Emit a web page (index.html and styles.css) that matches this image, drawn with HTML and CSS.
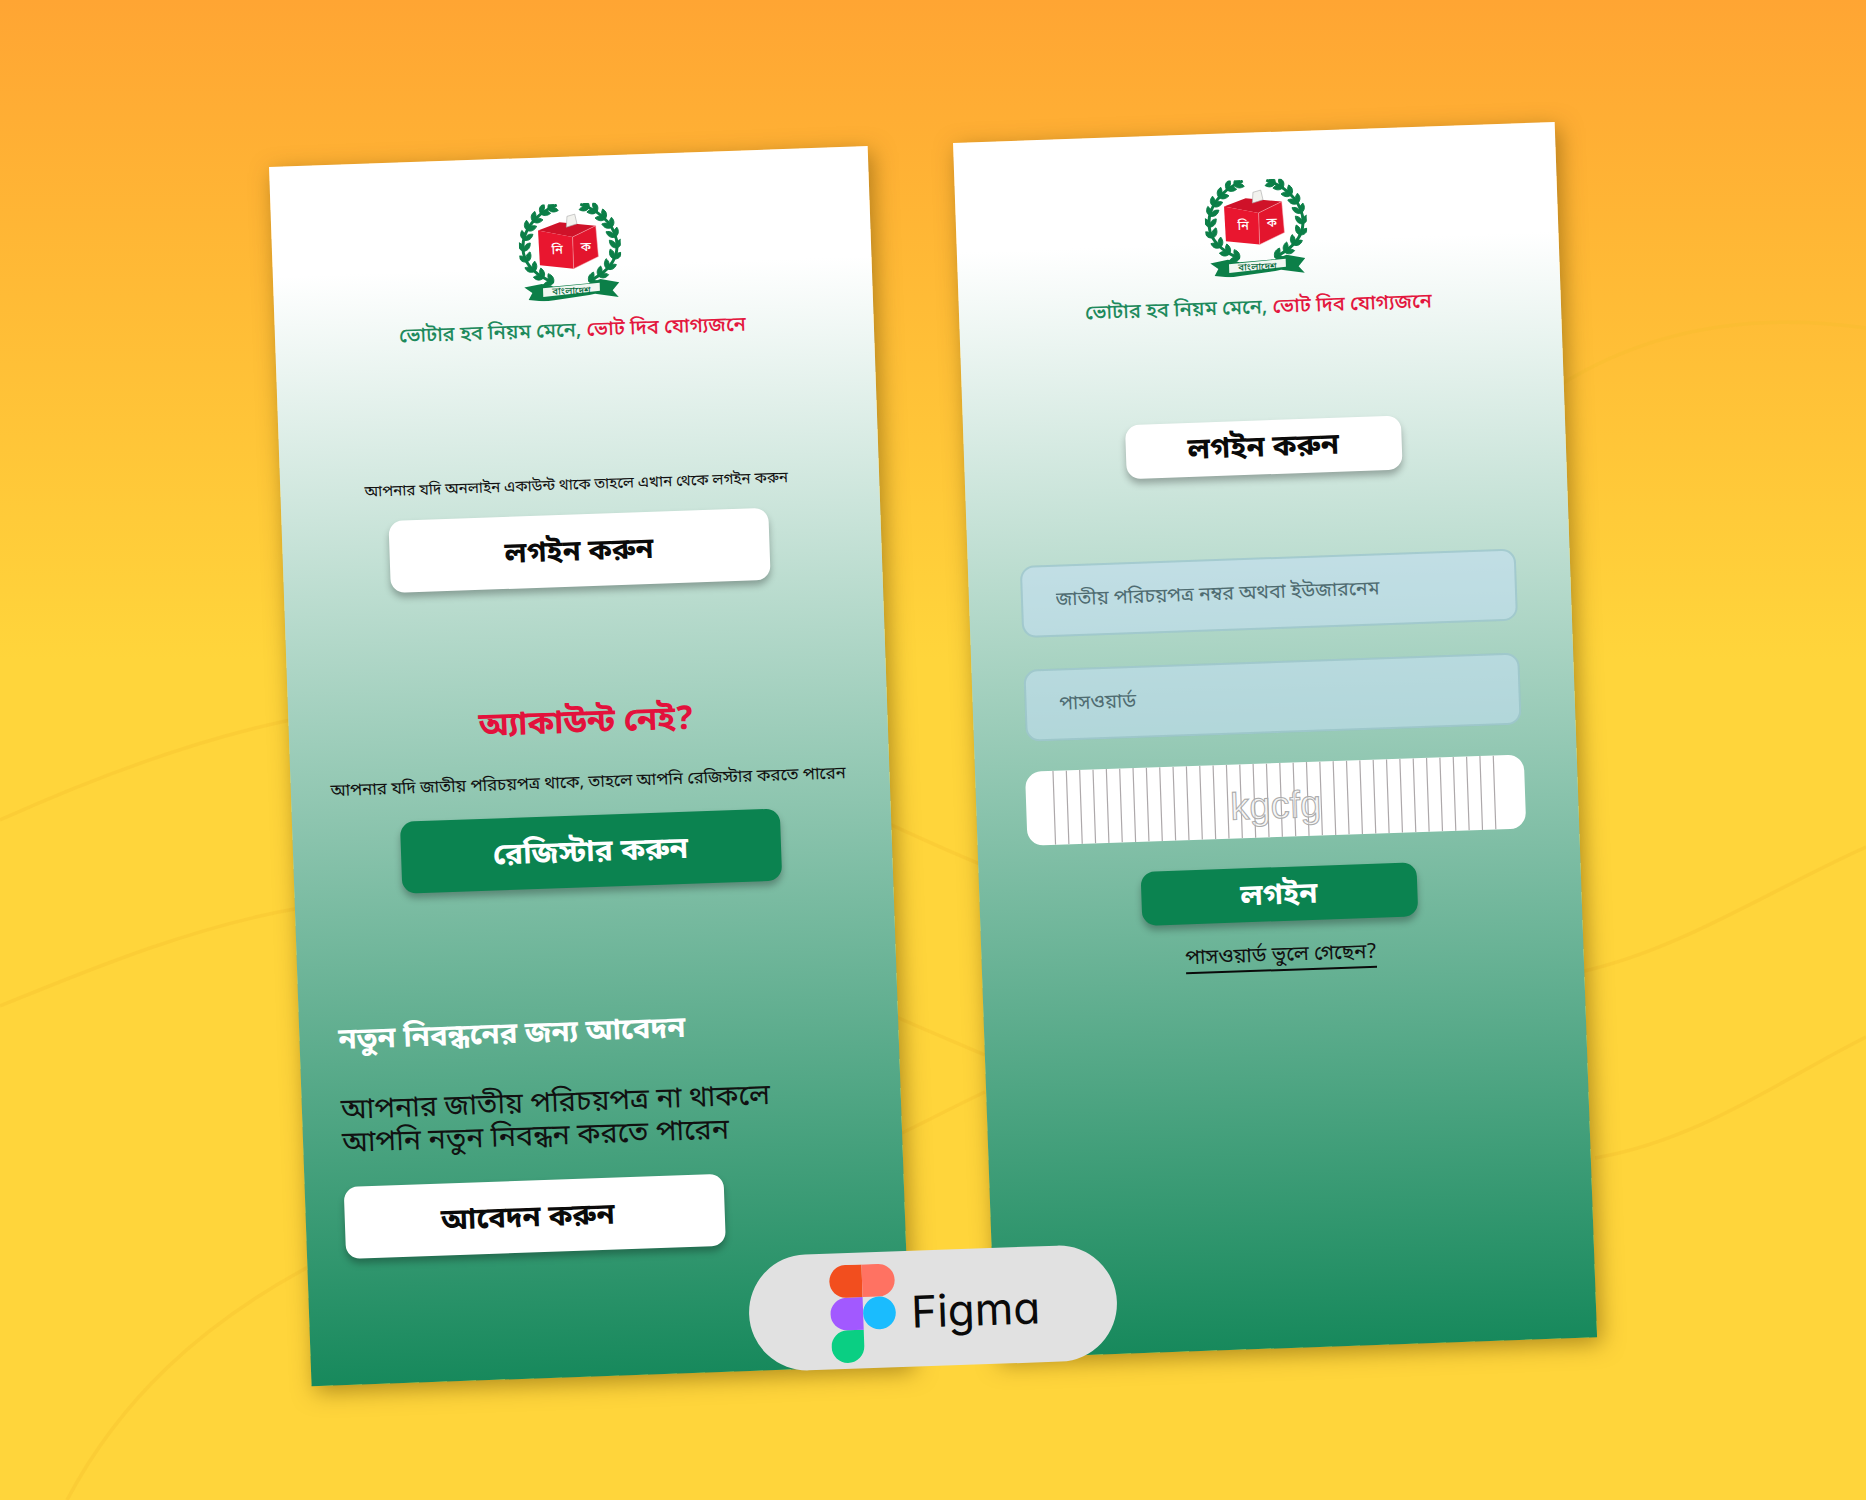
FILE: index.html
```html
<!DOCTYPE html>
<html lang="bn">
<head>
<meta charset="utf-8">
<title>ভোটার লগইন</title>
<link rel="stylesheet" href="styles.css">
</head>
<body>
<main class="stage">
  <svg class="bg-lines" viewBox="0 0 1866 1500" aria-hidden="true">
    <path d="M0 820C100 775 200 738 300 718"/>
    <path d="M0 1006C100 965 200 925 300 908"/>
    <path d="M67 1500C120 1400 200 1325 310 1266"/>
    <path d="M885 822C920 838 950 852 985 866"/>
    <path d="M892 1015C925 1030 950 1040 985 1055"/>
    <path d="M900 1134C925 1122 955 1106 985 1092"/>
    <path d="M1560 385C1640 335 1740 310 1866 328"/>
    <path d="M1580 972C1680 950 1770 890 1866 847"/>
    <path d="M1595 1158C1700 1140 1780 1080 1866 1037"/>
  </svg>

  <svg class="defs" aria-hidden="true">
    <defs>
      <path id="leaf" d="M0 0C3-3.4 7-3.6 10.500-.2 7 2.800 3 3 0 0Z"/>
      <g id="wreath-half" class="wreath">
        <path class="stem" d="M34 80C16 72 5 60 4 46C3 28 16 10 40 1"/>
        <use href="#leaf" transform="translate(34 80) rotate(-188)"/>
        <use href="#leaf" transform="translate(34 80) rotate(-118)"/>
        <use href="#leaf" transform="translate(24 75) rotate(-173)"/>
        <use href="#leaf" transform="translate(24 75) rotate(-103)"/>
        <use href="#leaf" transform="translate(15 68) rotate(-156)"/>
        <use href="#leaf" transform="translate(15 68) rotate(-86)"/>
        <use href="#leaf" transform="translate(8 58) rotate(-142)"/>
        <use href="#leaf" transform="translate(8 58) rotate(-72)"/>
        <use href="#leaf" transform="translate(5 47) rotate(-120)"/>
        <use href="#leaf" transform="translate(5 47) rotate(-50)"/>
        <use href="#leaf" transform="translate(6 36) rotate(-103)"/>
        <use href="#leaf" transform="translate(6 36) rotate(-33)"/>
        <use href="#leaf" transform="translate(9 26) rotate(-91)"/>
        <use href="#leaf" transform="translate(9 26) rotate(-21)"/>
        <use href="#leaf" transform="translate(15 17) rotate(-76)"/>
        <use href="#leaf" transform="translate(15 17) rotate(-6)"/>
        <use href="#leaf" transform="translate(23 9) rotate(-67)"/>
        <use href="#leaf" transform="translate(23 9) rotate(3)"/>
        <use href="#leaf" transform="translate(31 5) rotate(-51)"/>
        <use href="#leaf" transform="translate(31 5) rotate(10)"/>
      </g>
      <symbol id="ec-logo" viewBox="0 0 104 99">
        <use href="#wreath-half"/>
        <use href="#wreath-half" transform="matrix(-1 0 0 1 104 0)"/>
        <path class="box-top" d="M20 26.400 42.300 18.800 79 23.500 55 34.200Z"/>
        <path class="box-left" d="M20 26.400 55 34.200V66.600L20.700 62Z"/>
        <path class="box-right" d="M55 34.200 79 23.500 80.700 55.100 55 66.600Z"/>
        <path class="ballot" d="M50 13 58 11 60 21 49 24Z"/>
        <text class="box-letter" x="39" y="51">নি</text>
        <text class="box-letter" x="68" y="49">ক</text>
        <path class="ribbon" d="M4 84 22 81 34 84 70 82 82 78 101 82 94 90 100 97 76 93 70 94 34 98 24 99 8 97 12 90Z"/>
        <path class="ribbon-in" d="M23 85.500 81 82V90L23 94.500Z"/>
        <text class="ribbon-text" x="52" y="92.500">বাংলাদেশ</text>
      </symbol>
    </defs>
  </svg>

  <section class="card card-left">
    <svg class="logo"><use href="#ec-logo"/></svg>
    <p class="tagline">ভোটার হব নিয়ম মেনে, <span class="tag-red">ভোট দিব যোগ্যজনে</span></p>
    <p class="note note-login">আপনার যদি অনলাইন একাউন্ট থাকে তাহলে এখান থেকে লগইন করুন</p>
    <a class="btn btn-wide btn-white btn-login">লগইন করুন</a>
    <h2 class="no-account">অ্যাকাউন্ট নেই?</h2>
    <p class="note note-register">আপনার যদি জাতীয় পরিচয়পত্র থাকে, তাহলে আপনি রেজিস্টার করতে পারেন</p>
    <a class="btn btn-wide btn-green btn-register">রেজিস্টার করুন</a>
    <div class="apply">
      <h3 class="apply-title">নতুন নিবন্ধনের জন্য আবেদন</h3>
      <p class="apply-text">আপনার জাতীয় পরিচয়পত্র না থাকলে<br>আপনি নতুন নিবন্ধন করতে পারেন</p>
      <a class="btn btn-wide btn-white btn-apply">আবেদন করুন</a>
    </div>
  </section>

  <section class="card card-right">
    <svg class="logo"><use href="#ec-logo"/></svg>
    <p class="tagline tagline-right">ভোটার হব নিয়ম মেনে, <span class="tag-red">ভোট দিব যোগ্যজনে</span></p>
    <a class="btn btn-small btn-white btn-pill-login">লগইন করুন</a>
    <input class="field field-id" type="text" placeholder="জাতীয় পরিচয়পত্র নম্বর অথবা ইউজারনেম">
    <input class="field field-pass" type="text" placeholder="পাসওয়ার্ড">
    <div class="captcha">
      <svg class="captcha-lines" viewBox="0 0 499 74" aria-hidden="true">
        <path d="M28 0v74m13.350-74v74m13.350-74v74m13.350-74v74m13.350-74v74m13.350-74v74m13.350-74v74m13.350-74v74m13.350-74v74m13.350-74v74m13.350-74v74m13.350-74v74m13.350-74v74m13.350-74v74m13.350-74v74m13.350-74v74m13.350-74v74m13.350-74v74m13.350-74v74m13.350-74v74m13.350-74v74m13.350-74v74m13.350-74v74m13.350-74v74m13.350-74v74m13.350-74v74m13.350-74v74m13.350-74v74m13.350-74v74m13.350-74v74m13.350-74v74m13.350-74v74m13.350-74v74m13.350-74v74"/>
      </svg>
      <span class="captcha-text">kgcfg</span>
    </div>
    <a class="btn btn-small btn-green btn-submit">লগইন</a>
    <a class="forgot">পাসওয়ার্ড ভুলে গেছেন?</a>
  </section>

  <div class="figma-pill">
    <svg class="figma-mark" viewBox="0 0 200 300" aria-hidden="true">
      <path fill="#0acf83" d="M50 300c27.6 0 50-22.4 50-50v-50H50c-27.6 0-50 22.4-50 50s22.4 50 50 50z"/>
      <path fill="#a259ff" d="M0 150c0-27.6 22.4-50 50-50h50v100H50c-27.6 0-50-22.4-50-50z"/>
      <path fill="#f24e1e" d="M0 50C0 22.4 22.4 0 50 0h50v100H50C22.4 100 0 77.6 0 50z"/>
      <path fill="#ff7262" d="M100 0h50c27.6 0 50 22.4 50 50s-22.4 50-50 50h-50V0z"/>
      <path fill="#1abcfe" d="M200 150c0 27.6-22.4 50-50 50s-50-22.4-50-50 22.4-50 50-50 50 22.4 50 50z"/>
    </svg>
    <span class="figma-word">Figma</span>
  </div>
</main>
</body>
</html>
```

FILE: styles.css
```css
* { box-sizing: border-box; }

html, body { margin: 0; padding: 0; }

body {
  font-family: "Noto Sans Bengali", "Noto Serif Bengali", "Lohit Bengali", "Noto Sans", sans-serif;
  color: #111;
}

.stage {
  position: relative;
  width: 1866px;
  height: 1500px;
  overflow: hidden;
  background: linear-gradient(180deg, #ffa533 0%, #ffb635 15%, #ffd53b 44%, #ffd53b 100%);
}

.bg-lines {
  position: absolute;
  inset: 0;
  width: 1866px;
  height: 1500px;
}

.bg-lines path {
  fill: none;
  stroke: #f2bc2c;
  stroke-opacity: .3;
  stroke-width: 3.5;
}

.defs { position: absolute; width: 0; height: 0; }

.wreath { fill: #0c7f48; stroke: #0c7f48; stroke-width: .9; }
.stem { fill: none; stroke-width: 3; }
.box-top { fill: #cf1229; }
.box-left { fill: #e9162f; }
.box-right { fill: #e3152d; stroke: #f6b6bc; stroke-width: .5; }
.ballot { fill: #f2f2ee; stroke: #aaa; stroke-width: .6; }
.box-letter { fill: #fff; font-size: 13px; text-anchor: middle; font-weight: 500; }
.ribbon { fill: #0c7f48; }
.ribbon-in { fill: #f1f7f2; }
.ribbon-text { fill: #0c6b3e; font-size: 10px; text-anchor: middle; font-weight: 500; }

.card {
  position: absolute;
  display: flex;
  flex-direction: column;
  align-items: center;
  padding-top: 47px;
  transform: rotate(-2deg);
  transform-origin: 0 0;
  background: linear-gradient(180deg, #fff 0%, #fff 9%, #17895c 100%);
  box-shadow: 4px 6px 22px rgba(100, 70, 0, .5);
}

.card-left { left: 269px; top: 167px; width: 599px; height: 1220px; padding-right: 4px; }
.card-right { left: 953px; top: 143px; width: 602px; height: 1216px; padding-right: 3px; }

.logo { width: 102px; height: 97px; flex: none; }

.tagline {
  margin: 16px 0 0;
  font-size: 20.2px;
  line-height: 30px;
  font-weight: 500;
  color: #1d8a5c;
  white-space: nowrap;
}

.tagline-right { margin-top: 16.5px; }
.tag-red { color: #e3173e; }

.note {
  margin: 0;
  line-height: 20px;
  white-space: nowrap;
}

.note-login { margin-top: 129px; margin-right: 3px; font-size: 15.2px; }
.note-register { margin-top: 29px; font-size: 16.9px; }

.btn {
  display: flex;
  align-items: center;
  justify-content: center;
  flex: none;
  padding-top: 4px;
  border-radius: 14px;
  font-weight: 700;
  white-space: nowrap;
  box-shadow: 0 5px 7px rgba(0, 0, 0, .28);
}

.btn-wide { width: 380px; height: 72px; }
.btn-small { width: 276px; height: 54px; font-size: 29.500px; }
.btn-white { background: #fff; color: #0a0a0a; }
.btn-green { background: #0b8350; color: #fff; }

.btn-login { margin-top: 19px; margin-right: 2px; font-size: 29px; }
.btn-register { margin-top: 22px; font-size: 30px; }

.no-account {
  margin: 118px 0 0;
  font-size: 32.800px;
  line-height: 40px;
  font-weight: 700;
  color: #e3113c;
}

.apply {
  align-self: stretch;
  padding-left: 39px;
  margin-top: 128px;
}

.apply-title {
  margin: 0;
  font-size: 29.400px;
  line-height: 36px;
  font-weight: 700;
  color: #fff;
}

.apply-text {
  margin: 36px 0 0;
  font-size: 28.800px;
  line-height: 33px;
  white-space: nowrap;
}

.btn-apply { margin-top: 25px; padding-right: 14px; font-size: 29.400px; }

.btn-pill-login { margin-top: 97px; }

.field {
  display: block;
  flex: none;
  width: 496px;
  height: 72px;
  padding: 0 33px;
  border: 2px solid rgba(140, 185, 190, .55);
  border-radius: 14px;
  background: rgba(197, 224, 245, .57);
  font: 400 19.500px "Noto Sans Bengali", "Noto Sans", sans-serif;
  color: #59757a;
  outline: none;
}

.field::placeholder { color: #4f6c71; opacity: 1; }

.field-id { margin-top: 83px; }
.field-pass { margin-top: 32px; }

.captcha {
  position: relative;
  display: flex;
  align-items: center;
  justify-content: center;
  flex: none;
  width: 499px;
  height: 74px;
  margin-top: 30.500px;
  border-radius: 16px;
  background: #fff;
}

.captcha-lines {
  position: absolute;
  inset: 0;
  width: 499px;
  height: 74px;
}

.captcha-lines path {
  fill: none;
  stroke: #ada8aa;
  stroke-width: 1.2;
}

.captcha-text {
  position: relative;
  font-family: "Liberation Sans", Arial, sans-serif;
  font-size: 38px;
  line-height: 1;
  color: rgba(240, 240, 240, .6);
  -webkit-text-stroke: 1px #aaa;
  padding-top: 10px;
}

.btn-submit { margin-top: 30px; }

.forgot {
  margin-top: 22px;
  border-bottom: 2px solid #0a0a0a;
  font-size: 20.600px;
  line-height: 26px;
  color: #111;
  white-space: nowrap;
}

.figma-pill {
  position: absolute;
  left: 749px;
  top: 1250px;
  width: 368px;
  height: 116px;
  display: flex;
  align-items: center;
  gap: 15px;
  padding-top: 5px;
  padding-left: 81px;
  border-radius: 58px;
  background: #e1e1e1;
  transform: rotate(-2deg);
}

.figma-mark { width: 66px; height: 98px; flex: none; }

.figma-word {
  font-family: Inter, "Liberation Sans", sans-serif;
  font-feature-settings: "cv11" 1;
  font-size: 44px;
  line-height: 1;
  color: #0a0a0a;
}
```
